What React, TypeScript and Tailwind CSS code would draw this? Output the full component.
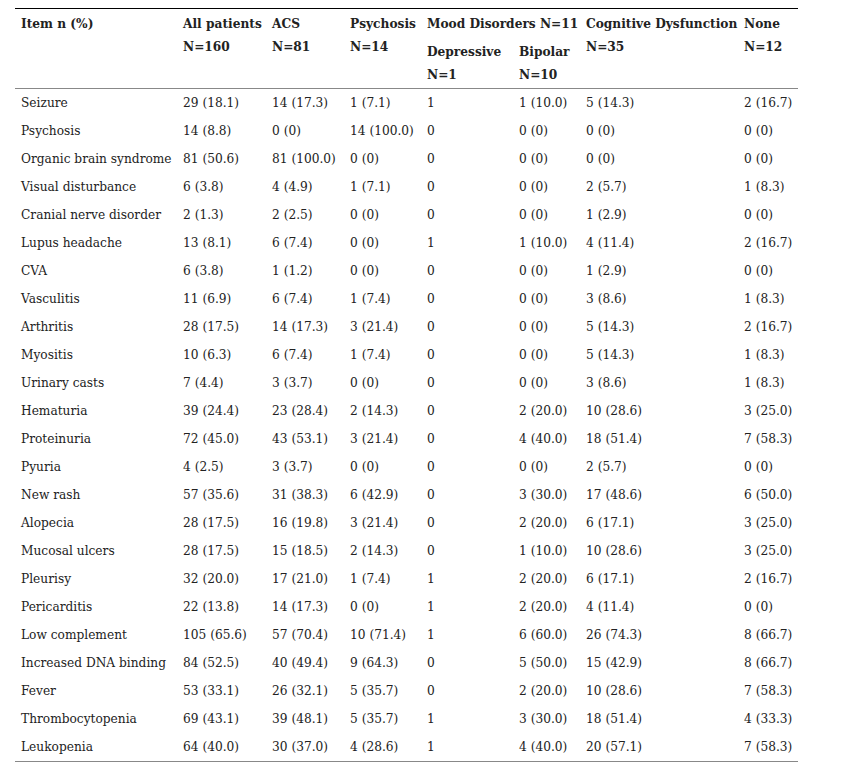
import React from 'react';

const rows: string[][] = [
  ['Seizure', '29 (18.1)', '14 (17.3)', '1 (7.1)', '1', '1 (10.0)', '5 (14.3)', '2 (16.7)'],
  ['Psychosis', '14 (8.8)', '0 (0)', '14 (100.0)', '0', '0 (0)', '0 (0)', '0 (0)'],
  ['Organic brain syndrome', '81 (50.6)', '81 (100.0)', '0 (0)', '0', '0 (0)', '0 (0)', '0 (0)'],
  ['Visual disturbance', '6 (3.8)', '4 (4.9)', '1 (7.1)', '0', '0 (0)', '2 (5.7)', '1 (8.3)'],
  ['Cranial nerve disorder', '2 (1.3)', '2 (2.5)', '0 (0)', '0', '0 (0)', '1 (2.9)', '0 (0)'],
  ['Lupus headache', '13 (8.1)', '6 (7.4)', '0 (0)', '1', '1 (10.0)', '4 (11.4)', '2 (16.7)'],
  ['CVA', '6 (3.8)', '1 (1.2)', '0 (0)', '0', '0 (0)', '1 (2.9)', '0 (0)'],
  ['Vasculitis', '11 (6.9)', '6 (7.4)', '1 (7.4)', '0', '0 (0)', '3 (8.6)', '1 (8.3)'],
  ['Arthritis', '28 (17.5)', '14 (17.3)', '3 (21.4)', '0', '0 (0)', '5 (14.3)', '2 (16.7)'],
  ['Myositis', '10 (6.3)', '6 (7.4)', '1 (7.4)', '0', '0 (0)', '5 (14.3)', '1 (8.3)'],
  ['Urinary casts', '7 (4.4)', '3 (3.7)', '0 (0)', '0', '0 (0)', '3 (8.6)', '1 (8.3)'],
  ['Hematuria', '39 (24.4)', '23 (28.4)', '2 (14.3)', '0', '2 (20.0)', '10 (28.6)', '3 (25.0)'],
  ['Proteinuria', '72 (45.0)', '43 (53.1)', '3 (21.4)', '0', '4 (40.0)', '18 (51.4)', '7 (58.3)'],
  ['Pyuria', '4 (2.5)', '3 (3.7)', '0 (0)', '0', '0 (0)', '2 (5.7)', '0 (0)'],
  ['New rash', '57 (35.6)', '31 (38.3)', '6 (42.9)', '0', '3 (30.0)', '17 (48.6)', '6 (50.0)'],
  ['Alopecia', '28 (17.5)', '16 (19.8)', '3 (21.4)', '0', '2 (20.0)', '6 (17.1)', '3 (25.0)'],
  ['Mucosal ulcers', '28 (17.5)', '15 (18.5)', '2 (14.3)', '0', '1 (10.0)', '10 (28.6)', '3 (25.0)'],
  ['Pleurisy', '32 (20.0)', '17 (21.0)', '1 (7.4)', '1', '2 (20.0)', '6 (17.1)', '2 (16.7)'],
  ['Pericarditis', '22 (13.8)', '14 (17.3)', '0 (0)', '1', '2 (20.0)', '4 (11.4)', '0 (0)'],
  ['Low complement', '105 (65.6)', '57 (70.4)', '10 (71.4)', '1', '6 (60.0)', '26 (74.3)', '8 (66.7)'],
  ['Increased DNA binding', '84 (52.5)', '40 (49.4)', '9 (64.3)', '0', '5 (50.0)', '15 (42.9)', '8 (66.7)'],
  ['Fever', '53 (33.1)', '26 (32.1)', '5 (35.7)', '0', '2 (20.0)', '10 (28.6)', '7 (58.3)'],
  ['Thrombocytopenia', '69 (43.1)', '39 (48.1)', '5 (35.7)', '1', '3 (30.0)', '18 (51.4)', '4 (33.3)'],
  ['Leukopenia', '64 (40.0)', '30 (37.0)', '4 (28.6)', '1', '4 (40.0)', '20 (57.1)', '7 (58.3)'],
];

// header cells keep their own line breaks
const th = 'text-left align-top font-bold px-[6px] pt-[4px] pb-[1px] leading-[23px] whitespace-nowrap';
const td = 'text-left align-middle px-[6px] py-[4px] leading-[20px] whitespace-nowrap';

export default function App() {
  return (
    <div className="bg-white w-[851px] h-[775px] pt-[8px] pl-[15px] text-[#222] text-[12.2px] font-['DejaVu_Serif',serif]">
      <table className="table-fixed border-collapse w-[783px]">
        <colgroup>
          <col className="w-[162px]" />
          <col className="w-[89px]" />
          <col className="w-[78px]" />
          <col className="w-[77px]" />
          <col className="w-[92px]" />
          <col className="w-[67px]" />
          <col className="w-[158px]" />
          <col className="w-[60px]" />
        </colgroup>
        <thead className="border-t border-t-black border-b border-b-[#888]">
          <tr>
            <th rowSpan={2} className={th}>Item n (%)</th>
            <th rowSpan={2} className={th}>All patients<br />N=160</th>
            <th rowSpan={2} className={th}>ACS<br />N=81</th>
            <th rowSpan={2} className={th}>Psychosis<br />N=14</th>
            <th colSpan={2} className={th}>Mood Disorders N=11</th>
            <th rowSpan={2} className={th}>Cognitive Dysfunction<br />N=35</th>
            <th rowSpan={2} className={th}>None<br />N=12</th>
          </tr>
          <tr>
            <th className={th}>Depressive<br />N=1</th>
            <th className={th}>Bipolar<br />N=10</th>
          </tr>
        </thead>
        <tbody className="border-b border-b-[#888]">
          {rows.map((r) => (
            <tr key={r[0]}>
              {r.map((c, i) => (
                <td key={i} className={td}>{c}</td>
              ))}
            </tr>
          ))}
        </tbody>
      </table>
    </div>
  );
}
